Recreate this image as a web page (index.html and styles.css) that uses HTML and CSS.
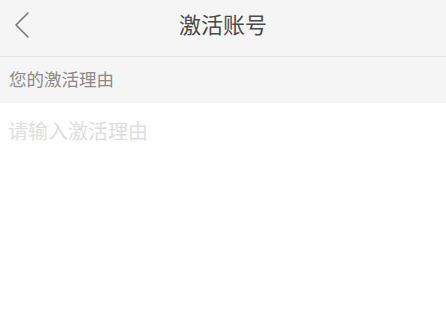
FILE: index.html
```html
<!DOCTYPE html>
<html lang="zh">
<head>
<meta charset="utf-8">
<link rel="stylesheet" href="styles.css">
</head>
<body>
<div class="page">
  <header class="navbar">
    <span class="back">
      <svg width="16" height="28" viewBox="0 0 16 28"><path d="M14 2 L2 14 L14 26" fill="none" stroke="#777" stroke-width="1.6" stroke-linecap="round" stroke-linejoin="round"/></svg>
    </span>
    <h1 class="title">激活账号</h1>
  </header>
  <div class="section-label">您的激活理由</div>
  <textarea class="reason" placeholder="请输入激活理由"></textarea>
</div>
</body>
</html>
```
FILE: styles.css
```css
html, body {
  margin: 0;
  padding: 0;
  background: #ffffff;
  font-family: "Noto Sans CJK SC", "Noto Sans", sans-serif;
}
.page {
  width: 446px;
  height: 335px;
  display: flex;
  flex-direction: column;
  overflow: hidden;
}
.navbar {
  height: 56px;
  background: #f5f5f5;
  border-bottom: 1px solid #e3e3e3;
  display: flex;
  align-items: center;
  justify-content: center;
  position: relative;
  flex-shrink: 0;
}
.back {
  position: absolute;
  left: 14px;
  top: 11px;
  width: 16px;
  height: 28px;
  display: block;
}
.back svg { display: block; }
.title {
  margin: 0;
  font-size: 22px;
  font-weight: 400;
  color: #4a4a4a;
  line-height: 1;
  margin-top: -10px;
}
.section-label {
  height: 46px;
  background: #f5f5f5;
  color: #8a8a8a;
  font-size: 17.5px;
  padding-left: 9px;
  display: flex;
  align-items: center;
  line-height: 1;
  flex-shrink: 0;
  padding-bottom: 2px;
  box-sizing: border-box;
}
.reason {
  flex: 1;
  border: none;
  outline: none;
  resize: none;
  background: #fff;
  padding: 16px 8px;
  margin: 0;
  font-family: inherit;
  font-size: 20px;
  line-height: 1.2;
  color: #333;
}
.reason::placeholder {
  color: #dedede;
}
```
